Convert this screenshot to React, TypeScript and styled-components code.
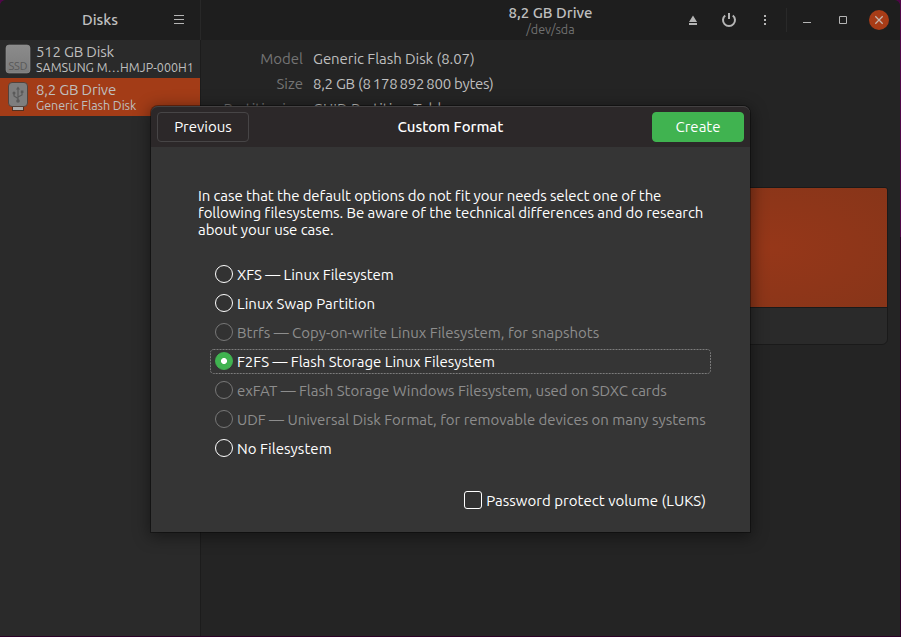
import React from "react";
import styled, { createGlobalStyle } from "styled-components";

const GlobalStyle = createGlobalStyle`
  * { box-sizing: border-box; }
  body {
    margin: 0;
    background: #2d0228;
    overflow: hidden;
    font-family: Ubuntu, "Noto Sans", sans-serif;
    font-size: 15px;
    color: #bfbfbf;
  }
`;

const Desktop = styled.div`
  width: 901px;
  height: 637px;
  padding: 0 1px 1px 0;
  background: linear-gradient(#4f0648 0 237px, #2d0228 237px);
`;

const Window = styled.div`
  position: relative;
  display: grid;
  grid-template-columns: 201px 1fr;
  grid-template-rows: 40px 1fr;
  width: 900px;
  height: 636px;
  border-radius: 6px 6px 0 0;
  overflow: hidden;
  background: #242424;
`;

const HeaderBar = styled.header<{ $divided?: boolean }>`
  display: grid;
  grid-template-columns: 1fr auto 1fr;
  align-items: center;
  background: #1e1e1e;
  border-right: ${(p) => (p.$divided ? "1px solid #282828" : "none")};
`;

const HeaderEnd = styled.div<{ $inset: number }>`
  grid-column: 3;
  display: flex;
  align-items: center;
  justify-content: flex-end;
  padding-right: ${(p) => p.$inset}px;
`;

const IconButton = styled.button`
  width: 36px;
  height: 36px;
  padding: 0;
  border: 0;
  background: none;
  color: #b5b5b5;
  display: grid;
  place-items: center;
`;

const Separator = styled.div`
  width: 1px;
  height: 24px;
  margin: 0 2px 0 3px;
  background: #292929;
`;

const Label = styled.span<{ $track?: number }>`
  white-space: nowrap;
  letter-spacing: ${(p) => p.$track ?? 0}px;
`;

const Title = styled(Label)`
  grid-column: 2;
  font-weight: 500;
  line-height: 17px;
  padding-bottom: 1px;
`;

const TitleStack = styled.div`
  grid-column: 2;
  display: flex;
  flex-direction: column;
  align-items: center;
  padding-bottom: 1px;
`;

const Subtitle = styled(Label)`
  font-size: 12.5px;
  line-height: 14px;
  color: #717171;
`;

const Sidebar = styled.aside`
  background: #2a2a2a;
  border-right: 1px solid #1c1c1c;
`;

const DriveRow = styled.div<{ $selected?: boolean }>`
  display: grid;
  grid-template-columns: 36px 1fr;
  align-items: center;
  height: 38px;
  background: ${(p) => (p.$selected ? "#a33c17" : "transparent")};
`;

const DriveIcon = styled.div`
  display: grid;
  place-items: center;
`;

const DriveText = styled.div`
  display: flex;
  flex-direction: column;
  line-height: 17px;
`;

const DriveModel = styled(Label)`
  font-size: 12.5px;
  line-height: 15px;
`;

const Main = styled.main`
  padding: 6px 12px 0 13px;
`;

const Details = styled.dl`
  display: grid;
  grid-template-columns: 89px 1fr;
  column-gap: 10px;
  height: 141px;
  margin: 0;
  grid-auto-rows: 25px;
  line-height: 25px;
`;

const Term = styled.dt`
  color: #747474;
  text-align: right;
  white-space: nowrap;
`;

const Value = styled.dd<{ $track?: number }>`
  margin: 0;
  white-space: nowrap;
  letter-spacing: ${(p) => p.$track ?? 0}px;
`;

const Volumes = styled.section`
  height: 158px;
  border: 1px solid #1a1a1a;
  border-radius: 3px 3px 6px 6px;
  background: #2a2a2a;
  overflow: hidden;
`;

const VolumeBlock = styled.div`
  height: 120px;
  border-bottom: 1px solid #1a1a1a;
  background: radial-gradient(ellipse 170px 90px at 555px 60px, #963719, #873519);
`;

const Dialog = styled.div`
  position: absolute;
  left: 151px;
  top: 106px;
  width: 599px;
  height: 426px;
  border-radius: 7px 7px 0 0;
  background: #353535;
  color: #fff;
  box-shadow: 0 0 0 1px rgba(0, 0, 0, 0.35), 0 3px 16px 2px rgba(0, 0, 0, 0.42);
`;

const DialogHeader = styled.div`
  display: grid;
  grid-template-columns: 92px 1fr 92px;
  align-items: center;
  height: 41px;
  padding: 0 6px;
  border-top: 1px solid #434142;
  border-radius: 7px 7px 0 0;
  background: #2c2829;
  text-align: center;
`;

const DialogTitle = styled(Label)`
  font-weight: 500;
  line-height: 17px;
  padding-bottom: 1px;
`;

const Button = styled.button<{ $suggested?: boolean }>`
  height: 30px;
  padding: 0;
  border: 1px solid ${(p) => (p.$suggested ? "#40b350" : "#474546")};
  border-radius: 4px;
  background: ${(p) => (p.$suggested ? "#40b350" : "#2c2829")};
  color: #fff;
  font: inherit;
  line-height: 28px;
`;

const DialogBody = styled.div`
  padding: 40px 39px 0 47px;
`;

const Intro = styled.p`
  display: flex;
  flex-direction: column;
  margin: 0 0 24px;
  line-height: 17px;
`;

const Options = styled.div`
  display: grid;
  gap: 4px;
  margin-left: 12px;
`;

const Option = styled.label<{ $disabled?: boolean }>`
  position: relative;
  display: flex;
  align-items: center;
  gap: 4px;
  height: 25px;
  padding-left: 5px;
  line-height: 25px;
  color: ${(p) => (p.$disabled ? "#8d8d8d" : "#fff")};
`;

const FocusRing = styled.svg`
  position: absolute;
  inset: 0;
`;

const Radio = styled.span<{ $checked?: boolean; $disabled?: boolean }>`
  width: 18px;
  height: 18px;
  margin-bottom: 1px;
  border-radius: 50%;
  border: 1px solid ${(p) => (p.$checked ? "#40b350" : p.$disabled ? "#787878" : "#fff")};
  background: ${(p) => (p.$checked ? "radial-gradient(circle, #fff 2.6px, #40b350 3.4px)" : "#323232")};
`;

const Encrypt = styled.label`
  display: flex;
  align-items: center;
  justify-content: flex-end;
  gap: 4px;
  height: 25px;
  margin: 27px 5px 0 0;
  line-height: 25px;
`;

const CheckBox = styled.span`
  width: 18px;
  height: 18px;
  margin-bottom: 1px;
  border: 1px solid #fff;
  border-radius: 3px;
  background: #323232;
`;

const filesystems = [
  { name: "XFS — Linux Filesystem", track: -0.03 },
  { name: "Linux Swap Partition", track: 0.03 },
  { name: "Btrfs — Copy-on-write Linux Filesystem, for snapshots", track: -0.01, disabled: true },
  { name: "F2FS — Flash Storage Linux Filesystem", track: -0.02, checked: true },
  { name: "exFAT — Flash Storage Windows Filesystem, used on SDXC cards", track: -0.04, disabled: true },
  { name: "UDF — Universal Disk Format, for removable devices on many systems", track: -0.02, disabled: true },
  { name: "No Filesystem", track: 0.05 },
];

const MenuIcon = () => (
  <svg width="12" height="12" viewBox="0 0 12 12" stroke="currentColor">
    <path d="M1 1.5h10M1 5.5h10M1 9.5h10" />
  </svg>
);

const EjectIcon = () => (
  <svg width="16" height="16" viewBox="0 0 16 16" fill="currentColor">
    <path d="M8 3.5 12 10H4zM4 11h8v2H4z" />
  </svg>
);

const PowerIcon = () => (
  <svg width="16" height="16" viewBox="0 0 16 16" fill="none" stroke="currentColor" strokeWidth="2">
    <path d="M4.2 3.4a6 6 0 1 0 7.6 0M8 1v6" />
  </svg>
);

const MoreIcon = () => (
  <svg width="16" height="16" viewBox="0 0 16 16" fill="currentColor">
    <path d="M7 3h2v2H7zM7 7h2v2H7zM7 11h2v2H7z" />
  </svg>
);

const MinimizeIcon = () => (
  <svg width="16" height="16" viewBox="0 0 16 16" fill="currentColor">
    <path d="M4 10h8v1H4z" />
  </svg>
);

const MaximizeIcon = () => (
  <svg width="16" height="16" viewBox="0 0 16 16" fill="none" stroke="currentColor">
    <path d="M4.5 4.5h7v7h-7z" />
  </svg>
);

const CloseIcon = () => (
  <svg width="20" height="20" viewBox="0 0 20 20">
    <circle cx="10" cy="10" r="10" fill="#a83c17" />
    <path d="m6.3 6.3 7.4 7.4m0-7.4-7.4 7.4" stroke="#c4b4ad" strokeWidth="1.3" />
  </svg>
);

const SsdIcon = () => (
  <svg width="26" height="30" viewBox="0 0 26 30">
    <defs>
      <linearGradient id="metal" x2="0" y2="1">
        <stop stopColor="#8b8b8b" />
        <stop offset="1" stopColor="#7c7c7c" />
      </linearGradient>
    </defs>
    <rect x="1" y="1" width="24" height="28" rx="3" fill="url(#metal)" stroke="#969696" strokeWidth=".6" />
    <text x="13" y="26" textAnchor="middle" fontSize="11" textLength="19" fill="#585858">
      SSD
    </text>
  </svg>
);

const UsbIcon = () => (
  <svg width="22" height="32" viewBox="0 0 22 32">
    <rect x="5.5" y="25" width="11" height="4.5" fill="#a9a9a9" stroke="#54301f" />
    <rect x="1.5" y="1.5" width="19" height="24" rx="3.5" fill="#7e7e7e" stroke="#54433c" />
    <g fill="none" stroke="#5a5a5a" strokeWidth="1.2">
      <path d="M11 8v12M11 17.5l-4-2.5v-2.5M11 16l4-2v-3" />
    </g>
    <path d="m11 5.5 2 3H9zM13.8 9.5h2.6v2.6h-2.6z" fill="#5a5a5a" />
    <circle cx="7" cy="12" r="1.5" fill="#5a5a5a" />
    <circle cx="11" cy="20" r="1.8" fill="#5a5a5a" />
  </svg>
);

export default function App() {
  return (
    <Desktop>
      <GlobalStyle />
      <Window>
        <HeaderBar $divided>
          <Title>Disks</Title>
          <HeaderEnd $inset={3}>
            <IconButton aria-label="Menu"><MenuIcon /></IconButton>
          </HeaderEnd>
        </HeaderBar>
        <HeaderBar>
          <TitleStack>
            <Title>8,2 GB Drive</Title>
            <Subtitle>/dev/sda</Subtitle>
          </TitleStack>
          <HeaderEnd $inset={3}>
            <IconButton aria-label="Eject"><EjectIcon /></IconButton>
            <IconButton aria-label="Power off"><PowerIcon /></IconButton>
            <IconButton aria-label="More"><MoreIcon /></IconButton>
            <Separator />
            <IconButton aria-label="Minimize"><MinimizeIcon /></IconButton>
            <IconButton aria-label="Maximize"><MaximizeIcon /></IconButton>
            <IconButton aria-label="Close"><CloseIcon /></IconButton>
          </HeaderEnd>
        </HeaderBar>

        <Sidebar>
          <DriveRow>
            <DriveIcon><SsdIcon /></DriveIcon>
            <DriveText>
              <Label $track={-0.2}>512 GB Disk</Label>
              <DriveModel>SAMSUNG M…HMJP-000H1</DriveModel>
            </DriveText>
          </DriveRow>
          <DriveRow $selected>
            <DriveIcon><UsbIcon /></DriveIcon>
            <DriveText>
              <Label $track={-0.2}>8,2 GB Drive</Label>
              <DriveModel $track={-0.04}>Generic Flash Disk</DriveModel>
            </DriveText>
          </DriveRow>
        </Sidebar>

        <Main>
          <Details>
            <Term>Model</Term>
            <Value $track={-0.06}>Generic Flash Disk (8.07)</Value>
            <Term>Size</Term>
            <Value $track={-0.28}>{"8,2 GB (8\u2009178\u2009892\u2009800 bytes)"}</Value>
            <Term>Partitioning</Term>
            <Value>GUID Partition Table</Value>
          </Details>
          <Volumes>
            <VolumeBlock />
          </Volumes>
        </Main>

        <Dialog role="dialog">
          <DialogHeader>
            <Button>Previous</Button>
            <DialogTitle>Custom Format</DialogTitle>
            <Button $suggested>Create</Button>
          </DialogHeader>
          <DialogBody>
            <Intro>
              <Label $track={-0.1}>In case that the default options do not fit your needs select one of the</Label>
              <Label $track={-0.07}>following filesystems. Be aware of the technical differences and do research</Label>
              <Label $track={-0.06}>about your use case.</Label>
            </Intro>
            <Options>
              {filesystems.map((fs) => (
                <Option key={fs.name} $disabled={fs.disabled}>
                  {fs.checked && (
                    <FocusRing width="501" height="25">
                      <rect x=".5" y=".5" width="500" height="24" rx="3" fill="none" stroke="#7c7c7c" strokeDasharray="2 1" />
                    </FocusRing>
                  )}
                  <Radio $checked={fs.checked} $disabled={fs.disabled} />
                  <Label $track={fs.track}>{fs.name}</Label>
                </Option>
              ))}
            </Options>
            <Encrypt>
              <CheckBox />
              <Label $track={0.03}>Password protect volume (LUKS)</Label>
            </Encrypt>
          </DialogBody>
        </Dialog>
      </Window>
    </Desktop>
  );
}
